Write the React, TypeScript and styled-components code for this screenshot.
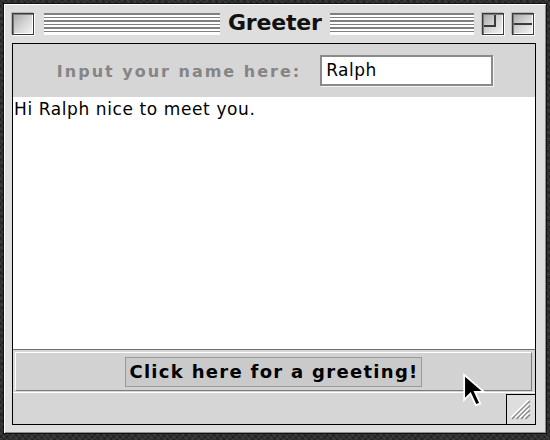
import React from "react";
import styled, { createGlobalStyle } from "styled-components";

const GlobalStyle = createGlobalStyle`
  html, body {
    margin: 0;
    padding: 0;
    width: 550px;
    height: 440px;
    overflow: hidden;
    background-color: #2e2e2e;
    background-image:
      repeating-linear-gradient(45deg, rgba(255,255,255,0.06) 0 2px, transparent 2px 4px),
      repeating-linear-gradient(-45deg, rgba(0,0,0,0.25) 0 2px, transparent 2px 5px);
  }
  * { box-sizing: border-box; }
`;

const Window = styled.div`
  position: relative;
  margin: 3px 0 0 3px;
  width: 544px;
  height: 431px;
  border: 1px solid #111;
  background: #dedede;
  box-shadow: inset 1px 1px 0 #fff, inset -1px -1px 0 #8c8c8c;
  display: flex;
  flex-direction: column;
  padding: 0 10px 8px 8px;
`;

const TitleBar = styled.div`
  height: 39px;
  display: grid;
  grid-template-columns: 22px 178px auto 1fr 22px 22px;
  column-gap: 8px;
  align-items: center;
  padding-right: 2px;
`;

const WinBox = styled.div`
  position: relative;
  width: 22px;
  height: 22px;
  border: 1px solid #3a3a3a;
  background: linear-gradient(135deg, #a8a8a8 0%, #d8d8d8 55%, #f4f4f4 100%);
  box-shadow: 1px 1px 0 #fff, -1px -1px 0 #b8b8b8, inset 1px 1px 0 #7a7a7a, inset -1px -1px 0 #fff;
`;

const ZoomMark = styled.div`
  position: absolute;
  left: 1px;
  top: 1px;
  width: 12px;
  height: 12px;
  border-right: 2px solid #3a3a3a;
  border-bottom: 2px solid #3a3a3a;
`;

const CollapseMark = styled.div`
  position: absolute;
  left: 1px;
  right: 1px;
  top: 9px;
  height: 2px;
  background: #3a3a3a;
`;

const Stripes = styled.div<{ $gap?: number }>`
  height: 21px;
  margin-left: ${(p) => p.$gap ?? 0}px;
  background: repeating-linear-gradient(
    to bottom,
    #fff 0 0.5px,
    #808080 0.5px 2px,
    #fff 2px 3.5px
  );
  box-shadow: 0 1px 0 #fff;
`;

const Title = styled.div`
  font-family: "DejaVu Sans", sans-serif;
  font-weight: bold;
  font-size: 22px;
  letter-spacing: -0.2px;
  color: #111;
  line-height: 1;
  padding-bottom: 1px;
`;

const Frame = styled.div`
  position: relative;
  flex: 1;
  border: 1px solid #000;
  display: flex;
  flex-direction: column;
  background: #d6d6d6;
`;

const InputStrip = styled.div`
  height: 53px;
  display: flex;
  align-items: center;
  justify-content: center;
  gap: 19px;
  background: #d6d6d6;
  padding-left: 2px;
`;

const Label = styled.span`
  font-family: "DejaVu Sans", sans-serif;
  font-weight: bold;
  font-size: 16px;
  letter-spacing: 2px;
  color: #858585;
  padding-top: 2px;
`;

const NameField = styled.div`
  width: 173px;
  height: 31px;
  background: #fff;
  border: 2px solid #8a8a8a;
  box-shadow: 1px 1px 0 #f4f4f4;
  font-family: "DejaVu Sans", sans-serif;
  font-size: 17px;
  letter-spacing: 0.5px;
  color: #000;
  padding: 3px 0 0 4px;
`;

const Output = styled.div`
  height: 252px;
  background: #fff;
  font-family: "DejaVu Sans", sans-serif;
  font-size: 17px;
  letter-spacing: 0.6px;
  color: #000;
  padding: 2px 0 0 1px;
`;

const ButtonPanel = styled.div`
  height: 43px;
  border-top: 1px solid #6e6e6e;
  padding: 2px 3px 1px 2px;
  background: #d6d6d6;
`;

const GreetButton = styled.div`
  height: 100%;
  display: flex;
  align-items: center;
  justify-content: center;
  border: 1px solid;
  border-color: #fff #7a7a7a #7a7a7a #fff;
  background: #d2d2d2;
`;

const ButtonLabel = styled.span`
  font-family: "DejaVu Sans", sans-serif;
  font-weight: bold;
  font-size: 18px;
  letter-spacing: 1.3px;
  color: #000;
  background: #cacaca;
  border: 1px solid #9a9a9a;
  padding: 3px 2px 3px 3px;
  line-height: 22px;
`;

const BottomStrip = styled.div`
  flex: 1;
  border-top: 1px solid #fff;
  background: #d6d6d6;
`;

const GrowBox = styled.div`
  position: absolute;
  right: 0;
  bottom: 0;
  width: 29px;
  height: 30px;
  border-left: 1px solid #000;
  border-top: 1px solid #000;
  background: #dedede;
  display: flex;
  align-items: center;
  justify-content: center;
`;

const Cursor = styled.svg`
  position: absolute;
  left: 458px;
  top: 369px;
`;

const grips = [0, 4.5, 9, 13.5];

export default function App() {
  return (
    <>
      <GlobalStyle />
      <Window>
        <TitleBar>
          <WinBox />
          <Stripes $gap={2} />
          <Title>Greeter</Title>
          <Stripes />
          <WinBox>
            <ZoomMark />
          </WinBox>
          <WinBox>
            <CollapseMark />
          </WinBox>
        </TitleBar>
        <Frame>
          <InputStrip>
            <Label>Input your name here:</Label>
            <NameField>Ralph</NameField>
          </InputStrip>
          <Output>Hi Ralph nice to meet you.</Output>
          <ButtonPanel>
            <GreetButton>
              <ButtonLabel>Click here for a greeting!</ButtonLabel>
            </GreetButton>
          </ButtonPanel>
          <BottomStrip />
          <GrowBox>
            <svg width="20" height="20" viewBox="0 0 20 20">
              {grips.map((o) => (
                <g key={o}>
                  <line x1={1 + o} y1={19} x2={19} y2={1 + o} stroke="#fff" strokeWidth="1.6" transform="translate(-1.2,-1.2)" />
                  <line x1={1 + o} y1={19} x2={19} y2={1 + o} stroke="#8a8a8a" strokeWidth="1.6" />
                </g>
              ))}
            </svg>
          </GrowBox>
        </Frame>
        <Cursor width="24" height="34" viewBox="0 0 13 19">
          <path d="M1 1 L1 15 L4.5 11.5 L7.5 18 L10 17 L7 10.5 L12 10.5 Z" fill="#000" stroke="#fff" strokeWidth="1" strokeLinejoin="miter" />
        </Cursor>
      </Window>
    </>
  );
}
